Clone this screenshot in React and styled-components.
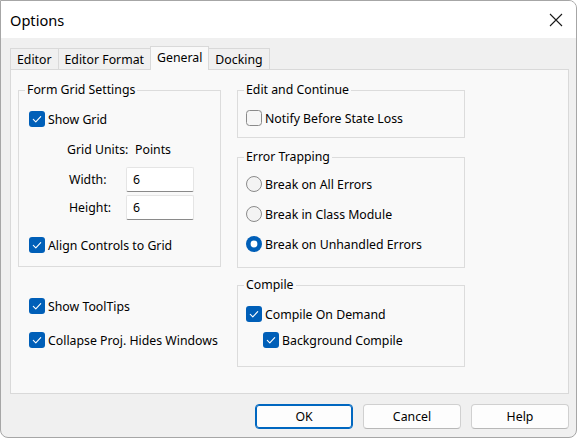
import styled, { createGlobalStyle } from "styled-components";

const GlobalStyle = createGlobalStyle`
	html, body {
		margin: 0;
		padding: 0;
		background: #ffffff;
	}
	body {
		font-family: "Segoe UI", "Noto Sans", sans-serif;
		font-size: 12.3px;
		color: #000000;
	}
	* {
		box-sizing: border-box;
	}
`;

const Window = styled.div`
	width: 577px;
	height: 438px;
	border: 1px solid #a6a6a6;
	border-radius: 0 8px 8px 8px;
	overflow: hidden;
	display: flex;
	flex-direction: column;
	background: #f0f0f0;
`;

const TitleBar = styled.div`
	height: 37px;
	flex-shrink: 0;
	background: #ffffff;
	display: flex;
	align-items: center;
	justify-content: space-between;
	padding: 0 13px 0 9px;
	font-size: 14.6px;
`;

const CloseButton = styled.div`
	width: 14px;
	height: 14px;
	display: flex;
`;

const Body = styled.div`
	flex: 1;
	display: flex;
	flex-direction: column;
	padding: 8px 7px 0 9px;
`;

const TabStrip = styled.div`
	display: flex;
	align-items: flex-end;
	height: 23px;
`;

const Tab = styled.div`
	position: relative;
	z-index: ${(p) => (p.$active ? 1 : 0)};
	height: ${(p) => (p.$active ? 24 : 21)}px;
	margin-bottom: ${(p) => (p.$active ? -1 : 0)}px;
	margin-left: -1px;
	padding: 0 6px ${(p) => (p.$active ? 2 : 0)}px;
	display: flex;
	align-items: center;
	border: 1px solid #d9d9d9;
	border-bottom: none;
	background: ${(p) => (p.$active ? "#f9f9f9" : "#f0f0f0")};
	white-space: nowrap;

	&:first-child {
		margin-left: 0;
	}
`;

const Panel = styled.div`
	height: 325px;
	border: 1px solid #d9d9d9;
	background: #f9f9f9;
	padding: 12px 0 0 7px;
	display: grid;
	grid-template-columns: 203px 228px;
	column-gap: 16px;
	align-items: start;
`;

const Column = styled.div`
	display: flex;
	flex-direction: column;
`;

const Group = styled.fieldset`
	margin: ${(p) => p.$mt || 0}px 0 0;
	padding: 0;
	border: 1px solid #dcdcdc;
	min-width: 0;

	legend {
		margin-left: 6px;
		padding: 0 2px;
		line-height: 16px;
	}
`;

const GroupBody = styled.div`
	display: flex;
	flex-direction: column;
	padding: ${(p) => p.$pt}px 0 ${(p) => p.$pb}px ${(p) => p.$pl}px;
`;

const Row = styled.label`
	display: flex;
	align-items: center;
	gap: 3px;
	height: 20px;
	margin-top: ${(p) => p.$mt || 0}px;
	margin-left: ${(p) => p.$indent || 0}px;
	white-space: nowrap;
`;

const FieldRow = styled.div`
	display: flex;
	align-items: center;
	height: ${(p) => p.$h || 20}px;
	margin-top: ${(p) => p.$mt || 0}px;
	margin-left: ${(p) => p.$indent || 0}px;
`;

const FieldLabel = styled.span`
	width: ${(p) => p.$w}px;
	flex-shrink: 0;
`;

const TextBox = styled.div`
	width: 68px;
	height: 25px;
	background: #ffffff;
	border: 1px solid #e5e5e5;
	border-bottom-color: #8a8a8a;
	border-radius: 2px;
	padding: 0 6px;
	display: flex;
	align-items: center;
`;

const ButtonRow = styled.div`
	display: flex;
	justify-content: flex-end;
	gap: 10px;
	margin-top: 10px;
`;

const Button = styled.div`
	width: 98px;
	height: 25px;
	display: flex;
	align-items: center;
	justify-content: center;
	background: #fdfdfd;
	border: 1px solid ${(p) => (p.$default ? "#0067c0" : "#d0d0d0")};
	border-bottom-color: ${(p) => (p.$default ? "#0067c0" : "#b8b8b8")};
	box-shadow: ${(p) => (p.$default ? "inset 0 0 0 1px #0067c0" : "none")};
	border-radius: 4px;
`;

const BoxMark = styled.svg`
	flex-shrink: 0;
	display: block;
`;

function CheckBox({ checked }) {
	return (
		<BoxMark width="16" height="16" viewBox="0 0 16 16">
			{checked ? (
				<>
					<rect x="0" y="0" width="16" height="16" rx="3" fill="#005fb8" />
					<path
						d="M4.3 8.4 L6.8 10.9 L11.7 5.6"
						fill="none"
						stroke="#ffffff"
						strokeWidth="1.1"
						strokeLinecap="round"
						strokeLinejoin="round"
					/>
				</>
			) : (
				<rect x="0.5" y="0.5" width="15" height="15" rx="3" fill="#f6f6f6" stroke="#8a8a8a" />
			)}
		</BoxMark>
	);
}

function Radio({ checked }) {
	return (
		<BoxMark width="16" height="16" viewBox="0 0 16 16">
			{checked ? (
				<>
					<circle cx="8" cy="8" r="8" fill="#005fb8" />
					<circle cx="8" cy="8" r="3.4" fill="#ffffff" />
				</>
			) : (
				<circle cx="8" cy="8" r="7.5" fill="#f3f3f3" stroke="#8a8a8a" />
			)}
		</BoxMark>
	);
}

function Check({ label, checked = true, mt, indent }) {
	return (
		<Row $mt={mt} $indent={indent}>
			<CheckBox checked={checked} />
			{label}
		</Row>
	);
}

function Option({ label, checked, mt }) {
	return (
		<Row $mt={mt}>
			<Radio checked={checked} />
			{label}
		</Row>
	);
}

export default function App() {
	return (
		<>
			<GlobalStyle />
			<Window>
				<TitleBar>
					<span>Options</span>
					<CloseButton>
						<svg width="14" height="14" viewBox="0 0 14 14">
							<path d="M1 1 L13 13 M13 1 L1 13" stroke="#1a1a1a" strokeWidth="1.1" />
						</svg>
					</CloseButton>
				</TitleBar>
				<Body>
					<TabStrip>
						<Tab>Editor</Tab>
						<Tab>Editor Format</Tab>
						<Tab $active>General</Tab>
						<Tab>Docking</Tab>
					</TabStrip>
					<Panel>
						<Column>
							<Group>
								<legend>Form Grid Settings</legend>
								<GroupBody $pt={11} $pb={11} $pl={10}>
									<Check label="Show Grid" />
									<FieldRow $mt={10} $indent={38}>
										<FieldLabel $w={68}>Grid Units:</FieldLabel>
										Points
									</FieldRow>
									<FieldRow $mt={8} $indent={40} $h={25}>
										<FieldLabel $w={57}>Width:</FieldLabel>
										<TextBox>6</TextBox>
									</FieldRow>
									<FieldRow $mt={3} $indent={40} $h={25}>
										<FieldLabel $w={57}>Height:</FieldLabel>
										<TextBox>6</TextBox>
									</FieldRow>
									<Check label="Align Controls to Grid" mt={15} />
								</GroupBody>
							</Group>
							<Check label="Show ToolTips" mt={29} indent={11} />
							<Check label="Collapse Proj. Hides Windows" mt={14} indent={11} />
						</Column>
						<Column>
							<Group>
								<legend>Edit and Continue</legend>
								<GroupBody $pt={10} $pb={9} $pl={8}>
									<Check label="Notify Before State Loss" checked={false} />
								</GroupBody>
							</Group>
							<Group $mt={11}>
								<legend>Error Trapping</legend>
								<GroupBody $pt={9} $pb={13} $pl={8}>
									<Option label="Break on All Errors" />
									<Option label="Break in Class Module" mt={10} />
									<Option label="Break on Unhandled Errors" checked mt={10} />
								</GroupBody>
							</Group>
							<Group $mt={9}>
								<legend>Compile</legend>
								<GroupBody $pt={11} $pb={16} $pl={8}>
									<Check label="Compile On Demand" />
									<Check label="Background Compile" mt={6} indent={17} />
								</GroupBody>
							</Group>
						</Column>
					</Panel>
					<ButtonRow>
						<Button $default>OK</Button>
						<Button>Cancel</Button>
						<Button>Help</Button>
					</ButtonRow>
				</Body>
			</Window>
		</>
	);
}
